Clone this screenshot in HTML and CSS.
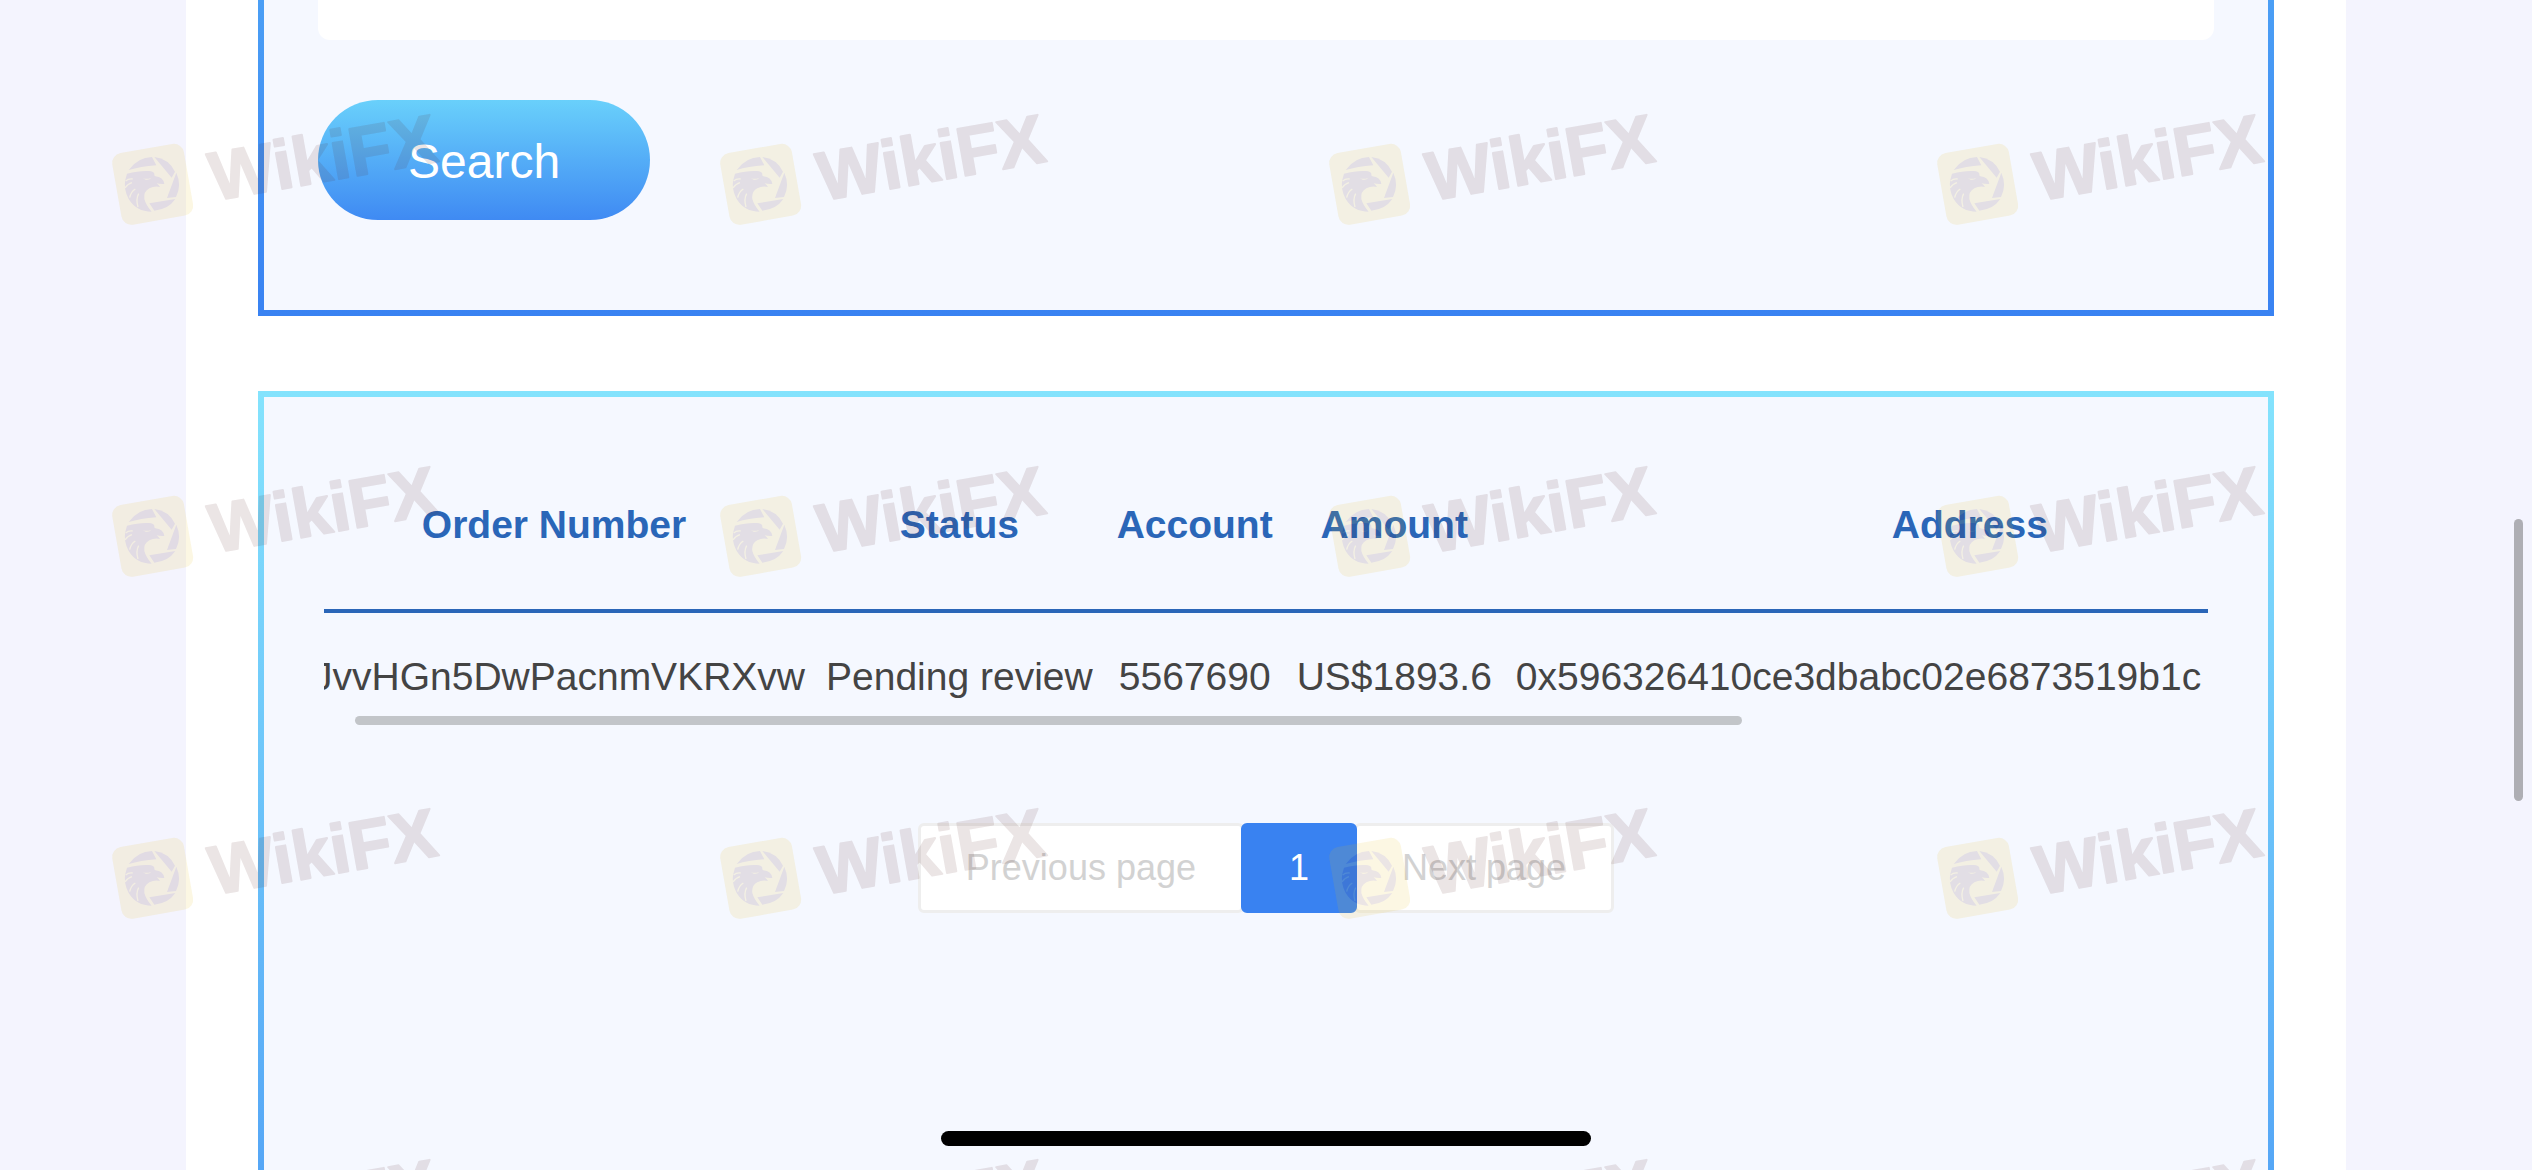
FILE: index.html
```html
<!DOCTYPE html>
<html lang="en">
<head>
    <meta charset="UTF-8">
    <meta name="viewport" content="width=device-width, initial-scale=1.0">
    <title>Orders</title>
    <link rel="stylesheet" href="styles.css">
</head>
<body>
    <main class="page">
        <!-- Search form -->
        <form class="card card-search">
            <input class="search-input" type="text" aria-label="Order Number">
            <button class="btn-search" type="button">Search</button>
        </form>

        <!-- Order list -->
        <section class="card card-list">
            <div class="table-wrap">
                <table class="orders">
                    <thead>
                        <tr>
                            <th class="col-order">Order Number</th>
                            <th>Status</th>
                            <th>Account</th>
                            <th>Amount</th>
                            <th class="col-address">Address</th>
                        </tr>
                    </thead>
                    <tbody>
                        <tr>
                            <td class="col-order">JvvHGn5DwPacnmVKRXvw</td>
                            <td>Pending review</td>
                            <td>5567690</td>
                            <td>US$1893.6</td>
                            <td class="col-address">0x596326410ce3dbabc02e6873519b1c</td>
                        </tr>
                    </tbody>
                </table>
                <div class="scroll-thumb"></div>
            </div>

            <nav class="pagination">
                <button class="page-btn" type="button" disabled>Previous page</button>
                <button class="page-btn active" type="button">1</button>
                <button class="page-btn" type="button" disabled>Next page</button>
            </nav>
        </section>
    </main>

    <!-- Watermark -->
    <svg class="watermark" aria-hidden="true">
        <defs>
            <g id="mark">
                <g transform="scale(.3333)">
                    <rect class="mark-box" x="28" y="24" width="218" height="218" rx="30" transform="rotate(-10 137 133)"/>
                    <path class="mark-ink" d="M65 90Q92 52 135 51L148 76Q100 80 65 90Z"/>
                    <path class="mark-ink" d="M142 51Q185 56 204 95L194 113Z"/>
                    <path class="mark-ink" d="M208 98Q225 135 207 171L180 174Z"/>
                    <path class="mark-ink" d="M127 190L205 177Q184 208 142 212Z"/>
                    <path class="mark-ink" d="M60 101Q98 91 126 93Q139 94 142 101Q141 107 145 109Q169 111 172 132Q160 133 149 130Q154 134 159 141Q143 137 127 145Q109 155 112 177Q117 196 134 215Q88 215 65 177Q49 146 55 119Z"/>
                    <path class="mark-box" d="M106 113Q119 120 133 113Q128 121 116 119Z"/>
                    <path class="mark-slit" d="M56 123Q65 115 77 117M54 144Q63 131 75 128M68 173Q72 155 85 147M93 201Q86 178 95 161"/>
                </g>
                <text class="mark-text" x="107" y="61" transform="rotate(-10 107 61)">WikiFX</text>
            </g>
            <g id="row">
                <use href="#mark" x="107"/>
                <use href="#mark" x="715"/>
                <use href="#mark" x="1324"/>
                <use href="#mark" x="1932"/>
            </g>
        </defs>
        <use href="#row" y="140"/>
        <use href="#row" y="492"/>
        <use href="#row" y="834"/>
        <use href="#row" y="1185"/>
    </svg>

    <div class="page-scroll"></div>
    <div class="home-bar"></div>
</body>
</html>
```
FILE: styles.css
```css
* {
    box-sizing: border-box;
}

body {
    margin: 0;
    padding: 0 186px;
    background-color: #f4f4fe;
    color: #444;
    font-family: "Liberation Sans", Arial, sans-serif;
    font-size: 39px;
    line-height: 52px;
}

.page {
    display: flex;
    flex-direction: column;
    gap: 75px;
    min-height: 100vh;
    padding: 0 72px;
    background-color: #fff;
}

.card {
    padding: 54px;
    border: 6px solid;
    background-color: #f5f8ff;
}

.card-search {
    padding-top: 0;
    padding-bottom: 90px;
    border-top: 0;
    border-image: linear-gradient(#4b9ff5, #3982f2) 6;
}

.card-list {
    flex: 1;
    border-bottom: 0;
    border-image: linear-gradient(#84e3fd, #55a6f6) 6;
}

/* Search form */
.search-input {
    display: block;
    width: 100%;
    height: 40px;
    margin-bottom: 60px;
    border: 0;
    border-radius: 0 0 12px 12px;
    background-color: #fff;
}

.btn-search {
    display: block;
    height: 120px;
    padding: 2px 90px 0;
    border: 0;
    border-radius: 60px;
    background: linear-gradient(#69d0fb, #3f8af3);
    color: #fff;
    font-family: inherit;
    font-size: 48px;
    cursor: pointer;
}

/* Orders table */
.table-wrap {
    position: relative;
    margin: 0 6px;
    overflow: hidden;
}

.orders {
    margin-left: -30px;
    border-collapse: collapse;
    white-space: nowrap;
    text-align: center;
}

.orders th {
    padding: 48px 12px 58px;
    border-bottom: 4px solid #2a66b8;
    color: #2a66b8;
}

.orders td {
    padding: 38px 12px 25px;
}

.orders .col-order {
    min-width: 520px;
}

.orders .col-address {
    min-width: 932px;
}

.orders td.col-order {
    padding-right: 9px;
    text-align: right;
}

.orders td.col-address {
    text-align: left;
}

.scroll-thumb {
    position: absolute;
    left: 31px;
    right: 466px;
    bottom: 3px;
    height: 9px;
    border-radius: 5px;
    background-color: #c2c5c9;
}

/* Pagination */
.pagination {
    display: flex;
    justify-content: center;
    margin-top: 95px;
}

.page-btn {
    height: 90px;
    padding: 0 45px;
    border: 3px solid #eee;
    border-radius: 6px;
    background-color: #fff;
    color: #d2d2d2;
    font-family: inherit;
    font-size: 36px;
}

.page-btn:first-child {
    margin-right: -3px;
}

.page-btn:last-child {
    margin-left: -3px;
}

.page-btn.active {
    position: relative;
    border-color: #3982f1;
    background-color: #3982f1;
    color: #fff;
}

/* Watermark */
.watermark {
    position: fixed;
    top: 0;
    left: 0;
    width: 100%;
    height: 100%;
    opacity: .12;
    pointer-events: none;
}

.mark-box {
    fill: #e4be1e;
}

.mark-ink {
    fill: #5c2a2a;
}

.mark-slit {
    fill: none;
    stroke: #e4be1e;
    stroke-width: 4;
}

.mark-text {
    fill: #5c2a2a;
    stroke: #5c2a2a;
    stroke-width: 2;
    stroke-linejoin: round;
    font-family: "Liberation Sans", Arial, sans-serif;
    font-size: 69px;
    font-weight: bold;
}

.page-scroll {
    position: fixed;
    top: 519px;
    right: 9px;
    width: 9px;
    height: 282px;
    border-radius: 5px;
    background-color: #aeaeb4;
}

.home-bar {
    position: fixed;
    bottom: 24px;
    left: 50%;
    width: 650px;
    height: 15px;
    margin-left: -325px;
    border-radius: 8px;
    background-color: #000;
}
```
